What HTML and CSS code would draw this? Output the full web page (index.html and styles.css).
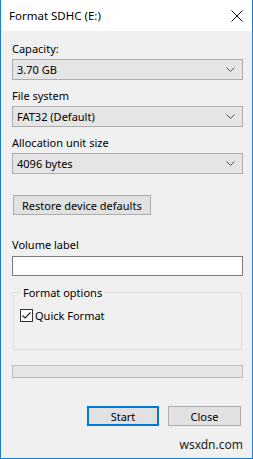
FILE: index.html
```html
<!DOCTYPE html>
<html>
<head>
    <meta charset="utf-8">
    <title>Format SDHC (E:)</title>
    <link rel="stylesheet" href="styles.css">
</head>
<body>
<div class="window">
    <div class="titlebar">
        <span class="title">Format SDHC (E:)</span>
        <svg class="close" width="12" height="12" viewBox="0 0 12 12">
            <path d="M0.5 0.5 L11.5 11.5 M11.5 0.5 L0.5 11.5" stroke="#111" stroke-width="1" fill="none"/>
        </svg>
    </div>
    <div class="client">
        <div class="label first">Capacity:</div>
        <div class="combo">
            <span>3.70 GB</span>
            <svg class="chev" width="9" height="5" viewBox="0 0 9 5"><path d="M0.5 0.5 L4.5 4.5 L8.5 0.5" stroke="#555" fill="none"/></svg>
        </div>

        <div class="label">File system</div>
        <div class="combo">
            <span>FAT32 (Default)</span>
            <svg class="chev" width="9" height="5" viewBox="0 0 9 5"><path d="M0.5 0.5 L4.5 4.5 L8.5 0.5" stroke="#555" fill="none"/></svg>
        </div>

        <div class="label">Allocation unit size</div>
        <div class="combo">
            <span>4096 bytes</span>
            <svg class="chev" width="9" height="5" viewBox="0 0 9 5"><path d="M0.5 0.5 L4.5 4.5 L8.5 0.5" stroke="#555" fill="none"/></svg>
        </div>

        <div class="btn restore">Restore device defaults</div>

        <div class="label volume">Volume label</div>
        <div class="textbox"></div>

        <div class="group">
            <div class="group-title">Format options</div>
            <div class="check">
                <svg class="box" width="13" height="13" viewBox="0 0 13 13">
                    <rect x="0.5" y="0.5" width="12" height="12" fill="#fff" stroke="#333"/>
                    <path d="M2.5 6.5 L5 9 L10.5 3.5" stroke="#222" stroke-width="1.1" fill="none"/>
                </svg>
                <span>Quick Format</span>
            </div>
        </div>

        <div class="progress"></div>

        <div class="actions">
            <div class="btn default">Start</div>
            <div class="btn">Close</div>
        </div>

        <div class="mark">wsxdn.com</div>
    </div>
</div>
</body>
</html>
```
FILE: styles.css
```css
body {
    margin: 0;
    background: #f0f0f0;
    font-family: "Noto Sans", "Open Sans", sans-serif;
    font-size: 11px;
    color: #000;
}

.window {
    width: 251px;
    height: 458px;
    border: 1px solid #1a7fd4;
    border-top: none;
    background: #f0f0f0;
    display: flex;
    flex-direction: column;
    overflow: hidden;
}

.titlebar {
    flex-shrink: 0;
    height: 31px;
    background: #fff;
    display: flex;
    align-items: center;
    justify-content: space-between;
    padding: 0 9px 0 8px;
}

.title {
    font-size: 11.5px;
    color: #000;
}

.close {
    display: block;
    margin-top: 1px;
}

.client {
    flex: 1;
    min-height: 0;
    padding: 0 9px 0 11px;
    display: flex;
    flex-direction: column;
}

.label {
    line-height: 15px;
    margin-top: 8px;
    margin-bottom: 3px;
}

.label.first {
    margin-top: 10px;
}

.combo {
    flex-shrink: 0;
    height: 19px;
    border: 1px solid #acacac;
    background: #e5e5e5;
    display: flex;
    align-items: center;
    justify-content: space-between;
    padding: 0 7px 0 4px;
}

.chev {
    display: block;
}

.btn {
    flex-shrink: 0;
    height: 18px;
    border: 1px solid #adadad;
    background: #e1e1e1;
    display: flex;
    align-items: center;
    justify-content: center;
}

.restore {
    align-self: flex-start;
    margin-top: 21px;
    margin-left: 1px;
    padding: 0 8px;
}

.label.volume {
    margin-top: 22px;
    margin-bottom: 4px;
}

.textbox {
    flex-shrink: 0;
    height: 18px;
    background: #fff;
    border: 1px solid #7a7a7a;
}

.group {
    flex-shrink: 0;
    margin-top: 16px;
    margin-left: 1px;
    margin-right: 1px;
    height: 56px;
    border: 1px solid #dcdcdc;
    position: relative;
}

.group-title {
    position: absolute;
    top: -8px;
    left: 7px;
    padding: 0 2px;
    background: #f0f0f0;
    line-height: 15px;
}

.check {
    display: flex;
    align-items: center;
    margin-top: 15px;
    margin-left: 6px;
}

.check .box {
    display: block;
    margin-right: 2px;
}

.progress {
    flex-shrink: 0;
    margin-top: 15px;
    height: 11px;
    background: #e6e6e6;
    border: 1px solid #bcbcbc;
}

.actions {
    display: flex;
    justify-content: flex-end;
    gap: 9px;
    margin-top: 28px;
    margin-right: 2px;
}

.actions .btn {
    width: 71px;
}

.actions .btn.default {
    width: 68px;
    height: 16px;
    border: 2px solid #0078d7;
}

.mark {
    align-self: flex-end;
    margin-top: 10px;
    font-size: 12px;
    color: #222;
}
```
